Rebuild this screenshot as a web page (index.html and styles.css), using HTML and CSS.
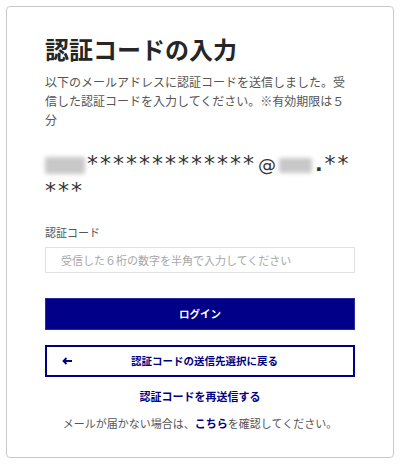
FILE: index.html
```html
<!DOCTYPE html>
<html lang="ja">
<head>
<meta charset="utf-8">
<title>認証コードの入力</title>
<link rel="stylesheet" href="styles.css">
</head>
<body>
<main class="card">
  <h1 class="title">認証コードの入力</h1>
  <p class="desc">以下のメールアドレスに認証コードを送信しました。受信した認証コードを入力してください。※有効期限は５分</p>
  <p class="email"><span class="blur blur-a"></span>*************<span class="at">@</span><span class="blur blur-b"></span><span class="dot">.</span>*****</p>
  <label class="label" for="code">認証コード</label>
  <input class="input" id="code" type="text" placeholder="受信した６桁の数字を半角で入力してください">
  <button class="btn-primary" type="button">ログイン</button>
  <button class="btn-back" type="button">
    <svg class="arrow" width="10" height="8" viewBox="0 0 10 8" aria-hidden="true"><path d="M10 4H2M4.5 1L1.5 4L4.5 7" fill="none" stroke="#000080" stroke-width="1.8"/></svg>
    <span class="btn-back-text">認証コードの送信先選択に戻る</span>
  </button>
  <a class="resend" href="#">認証コードを再送信する</a>
  <p class="note">メールが届かない場合は、<a class="note-link" href="#">こちら</a>を確認してください。</p>
</main>
</body>
</html>
```
FILE: styles.css
```css
* { box-sizing: border-box; }
html, body { margin: 0; padding: 0; background: #fff; }
body {
  padding: 6px;
  font-family: "Noto Sans CJK JP", "Noto Sans", sans-serif;
  color: #333;
}
.card {
  width: 388px;
  height: 452px;
  border: 1px solid #c9c9c9;
  border-radius: 4px;
  padding: 25px 38px 0 38px;
  display: flex;
  flex-direction: column;
}
.title {
  margin: 0;
  font-size: 24px;
  line-height: 34px;
  font-weight: 700;
  color: #262626;
}
.desc {
  margin: 6px 0 0;
  font-size: 12px;
  line-height: 19.2px;
  color: #555;
}
.email {
  margin: 21px 0 0;
  font-family: "DejaVu Sans", sans-serif;
  font-size: 22px;
  line-height: 26px;
  color: #333;
  word-break: break-all;
  letter-spacing: 2px;
}
.at {
  font-size: 18px;
  letter-spacing: 0;
  margin-left: 2px;
}
.dot {
  font-size: 20px;
  font-weight: 700;
  letter-spacing: 0;
  margin-right: 2px;
}
.blur {
  display: inline-block;
  height: 17px;
  vertical-align: -3px;
  background: #c8c8c8;
  filter: blur(2px);
  border-radius: 2px;
}
.blur-a { width: 40px; margin-right: 2px; }
.blur-b { width: 33px; margin: 0 3px 0 3px; height: 15px; vertical-align: -2px; }
.label {
  margin-top: 20px;
  font-size: 11px;
  line-height: 16px;
  color: #555;
}
.input {
  margin-top: 7px;
  height: 26px;
  width: 100%;
  border: 1px solid #e2e2e2;
  border-radius: 0;
  padding: 0 15px;
  font-family: inherit;
  font-size: 11px;
  color: #333;
  outline: none;
}
.input::placeholder { color: #a6a6a6; }
.btn-primary {
  margin-top: 25px;
  height: 32px;
  width: 100%;
  border: 1px solid #2a2aa0;
  background: #000088;
  color: #fff;
  font-family: inherit;
  font-size: 10.5px;
  font-weight: 700;
  padding: 0;
}
.btn-back {
  margin-top: 15px;
  height: 32px;
  width: 100%;
  border: 2px solid #000080;
  background: #fff;
  color: #000080;
  font-family: inherit;
  font-size: 10.5px;
  font-weight: 700;
  padding: 0 16px 0 15px;
  display: flex;
  align-items: center;
}
.arrow { flex: none; }
.btn-back-text { flex: 1; text-align: center; }
.resend {
  margin-top: 11px;
  font-size: 11px;
  line-height: 16px;
  font-weight: 700;
  color: #000080;
  text-decoration: none;
  text-align: center;
}
.note {
  margin: 11px 0 0;
  font-size: 11px;
  line-height: 16px;
  color: #555;
  text-align: center;
}
.note-link {
  color: #000080;
  font-weight: 700;
  text-decoration: none;
}
```
